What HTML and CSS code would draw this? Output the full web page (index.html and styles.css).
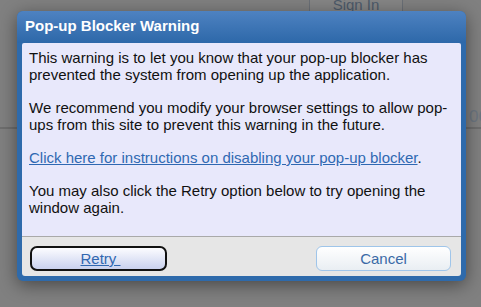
FILE: index.html
```html
<!DOCTYPE html>
<html lang="en">
<head>
    <meta charset="UTF-8">
    <meta name="viewport" content="width=device-width, initial-scale=1.0">
    <title>Pop-up Blocker Warning</title>
    <link rel="stylesheet" href="styles.css">
</head>
<body>
    <div class="page">
        <div class="page-header">
            <button class="signin" type="button">Sign In</button>
        </div>
        <div class="page-row">
            <span class="page-date">06</span>
        </div>
    </div>

    <div class="dialog" role="dialog" aria-labelledby="dialog-title">
        <div class="dialog-title" id="dialog-title">Pop-up Blocker Warning</div>
        <div class="dialog-body">
            <p>This warning is to let you know that your pop-up blocker has prevented the system from opening up the application.</p>
            <p>We recommend you modify your browser settings to allow pop-ups from this site to prevent this warning in the future.</p>
            <p><a href="#">Click here for instructions on disabling your pop-up blocker</a>.</p>
            <p>You may also click the Retry option below to try opening the window again.</p>
        </div>
        <div class="dialog-footer">
            <button class="btn btn-retry" type="button"><span>Retry&nbsp;</span></button>
            <button class="btn btn-cancel" type="button">Cancel</button>
        </div>
    </div>
</body>
</html>
```

FILE: styles.css
```css
body {
    margin: 0;
    width: 481px;
    height: 307px;
    overflow: hidden;
    background: #808080;
    font-family: 'Liberation Sans', Arial, sans-serif;
}
.page {
    height: 307px;
}
.page-header {
    display: flex;
    padding-left: 309px;
}
.signin {
    width: 94px;
    height: 28px;
    margin-top: -14px;
    background: #858585;
    border: 1px solid #6a6f76;
    border-top: none;
    border-radius: 0 0 3px 3px;
    color: #4d5a6a;
    font-family: 'Liberation Sans', Arial, sans-serif;
    font-size: 15px;
    padding: 10px 0 0;
}
.page-row {
    display: flex;
    justify-content: flex-end;
    margin-top: 89px;
    height: 24px;
    border-bottom: 2px solid #6e6e6e;
}
.page-date {
    color: #6c7680;
    font-size: 17px;
    margin-right: -7px;
    line-height: 20px;
    padding-top: 4px;
}

/* modal */
.dialog {
    position: absolute;
    left: 17px;
    top: 11px;
    width: 439px;
    padding: 0 5px 5px;
    background: #2e6aab;
    border-radius: 6px;
    box-shadow: 0 4px 18px rgba(0, 0, 0, 0.45);
}
.dialog-title {
    height: 32px;
    margin: 0 -5px;
    padding: 0 8px;
    line-height: 30px;
    background: linear-gradient(#4e82c1, #2d68a9);
    border-radius: 6px 6px 0 0;
    color: #fff;
    font-weight: bold;
    font-size: 15px;
}
.dialog-body {
    background: #e8e8fb;
    padding: 6px 7px 20px;
    border-bottom: 1px solid #a9a9a9;
    border-radius: 2px 2px 0 0;
    color: #111;
    font-size: 15px;
    line-height: 17px;
}
.dialog-body p {
    margin: 0 0 16px;
}
.dialog-body p:last-child {
    margin-bottom: 0;
}
.dialog-body a {
    color: #2f68b2;
}
.dialog-footer {
    display: flex;
    justify-content: space-between;
    padding: 9px 10px 5px 8px;
    background: #e6e6e6;
    border-radius: 0 0 3px 3px;
}
.btn {
    height: 25px;
    font-family: 'Liberation Sans', Arial, sans-serif;
    font-size: 15px;
    cursor: pointer;
    padding: 0;
}
.btn-retry {
    width: 137px;
    border: 2px solid #111;
    border-radius: 7px;
    background: linear-gradient(#fcfcff, #c9d1ee);
    color: #3067b0;
}
.btn-retry span {
    text-decoration: underline;
    padding-left: 4px;
}
.btn-cancel {
    width: 135px;
    border: 1px solid #9fc5ea;
    border-radius: 6px;
    background: linear-gradient(#ffffff, #e9eef3);
    color: #3a6aa6;
}
```
